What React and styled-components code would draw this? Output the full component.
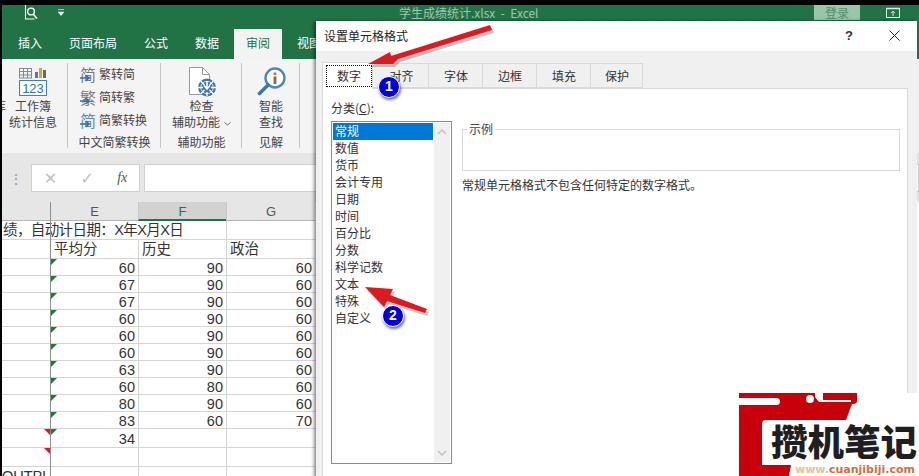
import React from 'react';
import styled, { createGlobalStyle, css } from 'styled-components';

const cjk = `"Noto Sans CJK SC", "Liberation Sans", sans-serif`;

const GlobalStyle = createGlobalStyle`
    html, body { margin: 0; padding: 0; background: #000; }
    body { font-family: ${cjk}; }
`

const scores = [
    ['60', '90', '60'], ['67', '90', '60'], ['67', '90', '60'], ['60', '90', '60'], ['60', '90', '60'],
    ['60', '90', '60'], ['63', '90', '60'], ['60', '80', '60'], ['80', '90', '60'], ['83', '60', '70'],
]
const mainTabs = ['插入', '页面布局', '公式', '数据', '审阅', '视图']
const dialogTabs = ['数字', '对齐', '字体', '边框', '填充', '保护']
const categories = ['常规', '数值', '货币', '会计专用', '日期', '时间', '百分比', '分数', '科学记数', '文本', '特殊', '自定义']

const StatsIcon = () => (
    <svg width="30" height="30" viewBox="0 0 30 30">
        <g fill="none" stroke="#7f8c96">
            <rect x="1.5" y="1.5" width="12" height="9.5" />
            <path d="M1.5 4.5h12M1.5 8h12M5.5 1.5V11M9.5 1.5V11" />
        </g>
        <rect x="17" y="5" width="3" height="6" fill="#4a7db5" />
        <rect x="21" y="1" width="3" height="10" fill="#e0a030" />
        <rect x="25" y="3" width="3" height="8" fill="#5e6b75" />
        <rect x="1.5" y="13.5" width="27" height="15" fill="#fff" stroke="#3f7fbf" />
        <text x="15" y="26" fontSize="13" textAnchor="middle" fill="#2f75b5" fontFamily="Liberation Sans">123</text>
    </svg>
)

const DocIcon = () => (
    <svg width="30" height="32" viewBox="0 0 30 32">
        <path d="M2.5 1.5h13l7 7v20h-20z" fill="#fff" stroke="#9a9a9a" />
        <path d="M15.5 1.5v7h7" fill="none" stroke="#9a9a9a" />
        <circle cx="20" cy="21.5" r="9" fill="#3f77ad" />
        <circle cx="20" cy="21.5" r="6.2" fill="none" stroke="#cfe0ef" strokeWidth="1" />
        <path d="M13.5 15l4 4M26.5 15l-4 4M13.5 28l4-4M26.5 28l-4-4M11 21.5h5M24 21.5h5M20 26v4" stroke="#fff" strokeWidth="1.3" />
        <path d="M20 15v7M17 19.5l3 3.5 3-3.5" fill="none" stroke="#fff" strokeWidth="1.6" />
    </svg>
)

const LookupIcon = () => (
    <svg width="30" height="30" viewBox="0 0 30 30">
        <circle cx="19" cy="11" r="9.5" fill="#fff" stroke="#4a86c0" strokeWidth="2.4" />
        <path d="M12 18L3.5 26.5" stroke="#3f77ad" strokeWidth="3.6" strokeLinecap="round" />
        <rect x="17.6" y="9.5" width="2.8" height="7.5" fill="#7a6a58" />
        <rect x="17.6" y="5.5" width="2.8" height="2.6" fill="#c8702a" />
    </svg>
)

const ConvertArrow = () => (
    <svg width="11" height="8" viewBox="0 0 11 8">
        <path d="M0 4h8M5.5 1L9 4 5.5 7" fill="none" stroke="#2f6fb0" strokeWidth="1.6" />
    </svg>
)

const PreviewIcon = () => (
    <svg width="14" height="15" viewBox="0 0 14 15">
        <path d="M1.5 0v14h9" fill="none" stroke="#fff" strokeWidth="1.1" />
        <circle cx="7" cy="6.5" r="3.4" fill="none" stroke="#fff" strokeWidth="1.4" />
        <path d="M9.5 9.5l3.5 4" stroke="#fff" strokeWidth="1.6" />
    </svg>
)

const ShareIcon = () => (
    <svg width="14" height="11" viewBox="0 0 14 11">
        <rect x="0.5" y="1.5" width="13" height="9" fill="none" stroke="#dfeee5" />
        <path d="M0.5 1.5h13" stroke="#dfeee5" strokeWidth="1.5" />
        <path d="M7 9V4.5M5 6.2l2-2 2 2" fill="none" stroke="#dfeee5" />
    </svg>
)

const RedArrow = ({ points, left, top, width, height }) => (
    <ArrowSvg $left={left} $top={top} width={width} height={height} viewBox={`0 0 ${width} ${height}`}>
        <polygon points={points} fill="rgba(60,40,40,0.28)" transform="translate(2 3)" />
        <polygon points={points} fill="#dc1a20" />
    </ArrowSvg>
)

const App = () => {
    return (
        <Screen>
            <GlobalStyle />
            <TitleBar>
                <PreviewSlot><PreviewIcon /></PreviewSlot>
                <QuickArrow>
                    <svg width="6" height="7" viewBox="0 0 6 7"><path d="M0 .5h6M0 3h6l-3 3.5z" fill="#fff" stroke="#fff" strokeWidth=".6" /></svg>
                </QuickArrow>
                <FileName>学生成绩统计.xlsx&nbsp; - &nbsp;Excel</FileName>
                <LoginButton>登录</LoginButton>
                <ShareSlot><ShareIcon /></ShareSlot>
            </TitleBar>
            <TabStrip>
                {mainTabs.map((t) => (
                    <MainTab key={t} $active={t === '审阅'}>{t}</MainTab>
                ))}
            </TabStrip>
            <Ribbon>
                <Group $width={66} $inset={4}>
                    <EdgeGlyph>库</EdgeGlyph>
                    <GroupBody>
                        <IconSlot><StatsIcon /></IconSlot>
                        <BigLabel>工作簿<br />统计信息</BigLabel>
                    </GroupBody>
                    <GroupName />
                </Group>
                <Group $width={93}>
                    <GroupBody $rows>
                        <SmallRow><SmallGlyph>简<ConvertArrow /></SmallGlyph>繁转简</SmallRow>
                        <SmallRow><SmallGlyph>繁<ConvertArrow /></SmallGlyph>简转繁</SmallRow>
                        <SmallRow><SmallGlyph $blue>简<ConvertArrow /></SmallGlyph>简繁转换</SmallRow>
                    </GroupBody>
                    <GroupName>中文简繁转换</GroupName>
                </Group>
                <Group $width={81}>
                    <GroupBody>
                        <IconSlot><DocIcon /></IconSlot>
                        <BigLabel>
                            检查<br />辅助功能
                            <Chevron width="7" height="4" viewBox="0 0 7 4"><path d="M.5.5l3 2.5 3-2.5" fill="none" stroke="#666" /></Chevron>
                        </BigLabel>
                    </GroupBody>
                    <GroupName>辅助功能</GroupName>
                </Group>
                <Group $width={58}>
                    <GroupBody>
                        <IconSlot><LookupIcon /></IconSlot>
                        <BigLabel>智能<br />查找</BigLabel>
                    </GroupBody>
                    <GroupName>见解</GroupName>
                </Group>
            </Ribbon>
            <FormulaBar>
                <Grip>⋮</Grip>
                <FormulaButtons>
                    <FormulaIcon>✕</FormulaIcon>
                    <FormulaIcon>✓</FormulaIcon>
                    <FormulaIcon $fx>fx</FormulaIcon>
                </FormulaButtons>
                <FormulaInput />
            </FormulaBar>
            <Sheet>
                <HeaderCell />
                <HeaderCell $divided>E</HeaderCell>
                <HeaderCell $divided $selected>F</HeaderCell>
                <HeaderCell $divided>G</HeaderCell>

                <Cell $span={3} $h={19}>绩，自动计日期：X年X月X日</Cell>
                <Cell $divided $h={19} />

                <Cell $h={19} />
                <Cell $divided $h={19}>平均分</Cell>
                <Cell $divided $h={19}>历史</Cell>
                <Cell $divided $h={19}>政治</Cell>

                {scores.map((row, i) => (
                    <React.Fragment key={i}>
                        <Cell $h={17} />
                        <Cell $divided $num $flag $h={17}>{row[0]}</Cell>
                        <Cell $divided $num $h={17}>{row[1]}</Cell>
                        <Cell $divided $num $h={17}>{row[2]}</Cell>
                    </React.Fragment>
                ))}

                <Cell $error $h={19} />
                <Cell $divided $num $flag $h={19}>34</Cell>
                <Cell $divided $h={19} />
                <Cell $divided $h={19} />

                <Cell $error $h={19} />
                <Cell $divided $h={19} />
                <Cell $divided $h={19} />
                <Cell $divided $h={19} />

                <Cell $clip $h={19}>OUTPUT</Cell>
                <Cell $divided $h={19} />
                <Cell $divided $h={19} />
                <Cell $divided $h={19} />
            </Sheet>

            <Dialog>
                <DialogHead>
                    <DialogTitle>设置单元格格式</DialogTitle>
                    <HelpMark>?</HelpMark>
                    <CloseMark>
                        <svg width="11" height="11" viewBox="0 0 11 11"><path d="M.5.5l10 10M10.5.5l-10 10" stroke="#222" strokeWidth="1" /></svg>
                    </CloseMark>
                </DialogHead>
                <DialogBody>
                    <DialogTabs>
                        {dialogTabs.map((t, i) => (
                            <DialogTab key={t} $active={i === 0}>{i === 0 ? <FocusBox>{t}</FocusBox> : t}</DialogTab>
                        ))}
                    </DialogTabs>
                    <Panel>
                        <ListColumn>
                            <ListCaption>分类(<u>C</u>):</ListCaption>
                            <ListBox>
                                <ListItems>
                                    {categories.map((c, i) => (
                                        <ListItem key={c} $selected={i === 0}>{c}</ListItem>
                                    ))}
                                </ListItems>
                                <ScrollTrack>
                                    <svg width="10" height="6" viewBox="0 0 10 6"><path d="M1 5l4-4 4 4" fill="none" stroke="#c2c2c2" strokeWidth="1.5" /></svg>
                                    <svg width="10" height="6" viewBox="0 0 10 6"><path d="M1 1l4 4 4-4" fill="none" stroke="#c2c2c2" strokeWidth="1.5" /></svg>
                                </ScrollTrack>
                            </ListBox>
                        </ListColumn>
                        <DetailColumn>
                            <SampleBox><SampleLegend>示例</SampleLegend></SampleBox>
                            <Description>常规单元格格式不包含任何特定的数字格式。</Description>
                        </DetailColumn>
                    </Panel>
                </DialogBody>
            </Dialog>

            <RedArrow left={362} top={20} width={136} height={52}
                points="6,44 28,32 29,36 128,5 130,10 36,39 31,44" />
            <Badge $left={378} $top={76}>1</Badge>
            <RedArrow left={360} top={282} width={72} height={36}
                points="5,5 33,7 30,13 67,27 65,31 27,19 24,25" />
            <Badge $left={382} $top={305}>2</Badge>

            <Watermark>
                <LogoBack width="180" height="83" viewBox="0 0 180 83">
                    <path d="M0 0H118V8Q118 11 114 11H113L107 27H27Q23 27 23 31V72H52L50 83H0Z" fill="#c8000b" />
                    <rect x="-4" y="5" width="45" height="7" rx="3.5" fill="#fff" />
                    <circle cx="71" cy="6" r="4" fill="#fff" />
                    <path d="M76 0H84V7H112V9H80L76 4Z" fill="#fff" />
                </LogoBack>
                <LogoTitle>攒机笔记</LogoTitle>
                <LogoSite>www.<SiteName>cuanjibiji.com</SiteName></LogoSite>
            </Watermark>
        </Screen>
    )
}

export default App

const Screen = styled.div`
    position: relative;
    width: 919px;
    height: 476px;
    box-sizing: border-box;
    padding: 5px 0 0 2px;
    overflow: hidden;
    background: #000;
    display: flex;
    flex-direction: column;
`

const TitleBar = styled.div`
    height: 15px;
    flex: none;
    background: #217346;
    display: flex;
    align-items: center;
    color: #fff;
`

const PreviewSlot = styled.div`
    width: 14px;
    margin-left: 22px;
    display: flex;
`

const QuickArrow = styled.div`
    width: 6px;
    margin-left: 20px;
    display: flex;
`

const FileName = styled.div`
    margin-left: 335px;
    width: 415px;
    font-size: 12px;
    line-height: 15px;
    color: #a3c5b0;
    white-space: nowrap;
`

const LoginButton = styled.div`
    width: 46px;
    height: 15px;
    background: #9ac5a9;
    color: #4d8f68;
    font-size: 12px;
    line-height: 15px;
    text-align: center;
`

const ShareSlot = styled.div`
    margin-left: 26px;
    display: flex;
`

const TabStrip = styled.div`
    height: 39px;
    flex: none;
    box-sizing: border-box;
    padding: 9px 0 0 4px;
    background: #217346;
    display: flex;
`

const MainTab = styled.div`
    height: 30px;
    padding: 0 12px;
    margin-right: 3px;
    font-size: 12px;
    line-height: 28px;
    color: #fff;
    white-space: nowrap;
    ${(p) => p.$active && css`
        background: #f3f3f3;
        color: #217346;
    `}
`

const Ribbon = styled.div`
    height: 94px;
    flex: none;
    background: #f4f4f4;
    display: flex;
    overflow: hidden;
`

const Group = styled.div`
    width: ${(p) => p.$width}px;
    flex: none;
    box-sizing: border-box;
    padding-right: ${(p) => p.$inset || 0}px;
    display: flex;
    flex-direction: column;
    position: relative;
    &::after {
        content: '';
        position: absolute;
        right: 0;
        top: 4px;
        bottom: 5px;
        width: 1px;
        background: #c6c6c6;
    }
`

const EdgeGlyph = styled.span`
    position: absolute;
    left: -8px;
    top: 39px;
    font-size: 12px;
    line-height: 16px;
    color: #444;
`

const GroupBody = styled.div`
    flex: 1;
    display: flex;
    flex-direction: column;
    align-items: center;
    padding-top: ${(p) => (p.$rows ? '3px' : '7px')};
    ${(p) => p.$rows && css`
        align-items: flex-start;
        padding-left: 12px;
    `}
`

const IconSlot = styled.div`
    height: 32px;
    display: flex;
    align-items: center;
`

const BigLabel = styled.div`
    font-size: 12px;
    line-height: 16px;
    text-align: center;
    color: #444;
    white-space: nowrap;
`

const Chevron = styled.svg`
    margin-left: 4px;
    vertical-align: middle;
`

const SmallRow = styled.div`
    height: 23px;
    display: flex;
    align-items: center;
    font-size: 12px;
    color: #444;
    white-space: nowrap;
`

const SmallGlyph = styled.span`
    position: relative;
    width: 19px;
    font-size: 16px;
    line-height: 20px;
    color: ${(p) => (p.$blue ? '#5b8db8' : '#7a7a7a')};
    svg {
        position: absolute;
        left: 0;
        bottom: 2px;
    }
`

const GroupName = styled.div`
    height: 22px;
    flex: none;
    font-size: 12px;
    line-height: 22px;
    text-align: center;
    color: #444;
    white-space: nowrap;
`

const FormulaBar = styled.div`
    height: 49px;
    flex: none;
    box-sizing: border-box;
    padding: 11px 0 10px 7px;
    background: #e6e6e6;
    display: flex;
    align-items: stretch;
`

const Grip = styled.div`
    width: 22px;
    font-size: 14px;
    line-height: 28px;
    color: #999;
`

const FormulaButtons = styled.div`
    width: 109px;
    box-sizing: border-box;
    background: #fff;
    border: 1px solid #d0d0d0;
    display: flex;
    justify-content: space-around;
    align-items: center;
`

const FormulaIcon = styled.span`
    font-size: ${(p) => (p.$fx ? '14px' : '16px')};
    color: ${(p) => (p.$fx ? '#555' : '#c0c0c0')};
    font-family: ${(p) => (p.$fx ? '"Liberation Serif", serif' : '"DejaVu Sans", sans-serif')};
    font-style: ${(p) => (p.$fx ? 'italic' : 'normal')};
`

const FormulaInput = styled.div`
    flex: 1;
    margin-left: 4px;
    background: #fff;
    border: 1px solid #d0d0d0;
`

const Sheet = styled.div`
    flex: 1;
    min-height: 0;
    overflow: hidden;
    position: relative;
    background: #fff;
    display: grid;
    grid-template-columns: 48px 88px 88px 89px;
    grid-auto-rows: min-content;
    font-family: "Liberation Sans", "Noto Sans CJK SC", sans-serif;
    &::after {
        content: '';
        position: absolute;
        left: 48px;
        top: 0;
        bottom: 0;
        width: 1px;
        background: #8d8d8d;
    }
`

const HeaderCell = styled.div`
    height: 19px;
    box-sizing: border-box;
    background: ${(p) => (p.$selected ? '#d2d2d2' : '#e6e6e6')};
    color: ${(p) => (p.$selected ? '#2c6e49' : '#555')};
    border-bottom: ${(p) => (p.$selected ? '2px solid #217346' : '1px solid #b5b5b5')};
    border-left: ${(p) => (p.$divided ? '1px solid #c8c8c8' : 'none')};
    font-size: 13px;
    line-height: 19px;
    text-align: center;
`

const Cell = styled.div`
    grid-column: span ${(p) => p.$span || 1};
    height: ${(p) => p.$h}px;
    box-sizing: border-box;
    position: relative;
    border-bottom: 1px solid #d4d4d4;
    border-left: ${(p) => (p.$divided ? '1px solid #d4d4d4' : 'none')};
    padding: 0 3px;
    font-size: 14.5px;
    line-height: ${(p) => p.$h + (p.$num ? 1 : 0)}px;
    color: #333;
    text-align: ${(p) => (p.$num ? 'right' : 'left')};
    white-space: nowrap;
    overflow: hidden;
    ${(p) => p.$span && css`
        padding-left: 1px;
        letter-spacing: -0.6px;
    `}
    ${(p) => p.$clip && css`
        padding: 0;
        line-height: 19px;
    `}
    ${(p) => p.$flag && css`
        &::before {
            content: '';
            position: absolute;
            left: 0;
            top: 0;
            border-top: 6px solid #1e7b34;
            border-right: 6px solid transparent;
        }
    `}
    ${(p) => p.$error && css`
        &::before {
            content: '';
            position: absolute;
            right: 0;
            top: 0;
            border-top: 6px solid #e81123;
            border-left: 6px solid transparent;
        }
    `}
`

const Dialog = styled.div`
    position: absolute;
    left: 316px;
    top: 21px;
    width: 601px;
    height: 470px;
    background: #f0f0f0;
    box-shadow: -2px 0 3px rgba(0, 0, 0, 0.45);
    display: flex;
    flex-direction: column;
`

const DialogHead = styled.div`
    height: 30px;
    flex: none;
    background: #fff;
    display: flex;
    align-items: center;
    padding: 0 0 2px 8px;
    box-sizing: border-box;
`

const DialogTitle = styled.div`
    flex: 1;
    font-size: 12px;
    color: #222;
`

const HelpMark = styled.div`
    width: 44px;
    font-family: "Liberation Sans", sans-serif;
    font-weight: bold;
    font-size: 13px;
    color: #333;
`

const CloseMark = styled.div`
    width: 28px;
    display: flex;
`

const DialogBody = styled.div`
    flex: 1;
    display: flex;
    flex-direction: column;
    padding: 11px 9px 0 6px;
`

const DialogTabs = styled.div`
    height: 26px;
    flex: none;
    display: flex;
    align-items: flex-end;
    position: relative;
`

const DialogTab = styled.div`
    box-sizing: border-box;
    width: ${(p) => (p.$active ? '51px' : '54px')};
    height: ${(p) => (p.$active ? '27px' : '25px')};
    margin-bottom: ${(p) => (p.$active ? '-1px' : '0')};
    background: ${(p) => (p.$active ? '#fff' : '#f0f0f0')};
    border: 1px solid #d9d9d9;
    border-left: ${(p) => (p.$active ? '1px solid #d9d9d9' : 'none')};
    border-bottom: ${(p) => (p.$active ? 'none' : '1px solid #d9d9d9')};
    font-size: 12px;
    line-height: 23px;
    text-align: center;
    color: #333;
    &:nth-child(2) { width: 56px; padding-left: 2px; }
    &:nth-child(n+3) { padding-left: 1px; }
    &:last-child { width: 52px; }
`

const FocusBox = styled.div`
    box-sizing: border-box;
    height: 22px;
    margin: 2px 0 0 3px;
    border: 1px dotted #111;
    line-height: 19px;
`

const Panel = styled.div`
    flex: 1;
    background: #fff;
    border: 1px solid #d9d9d9;
    display: flex;
    padding: 10px 7px 0 8px;
`

const ListColumn = styled.div`
    width: 121px;
    flex: none;
`

const ListCaption = styled.div`
    height: 22px;
    font-size: 12px;
    line-height: 18px;
    color: #333;
`

const ListBox = styled.div`
    height: 343px;
    box-sizing: border-box;
    border: 1px solid #8a8a8a;
    padding: 1px;
    display: flex;
`

const ListItems = styled.div`
    flex: 1;
    padding-right: 1px;
`

const ListItem = styled.div`
    height: 17px;
    padding-left: 2px;
    font-size: 12px;
    line-height: 15px;
    color: ${(p) => (p.$selected ? '#fff' : '#333')};
    background: ${(p) => (p.$selected ? '#0078d7' : 'transparent')};
`

const ScrollTrack = styled.div`
    width: 16px;
    flex: none;
    background: #f0f0f0;
    display: flex;
    flex-direction: column;
    justify-content: space-between;
    align-items: center;
    padding: 6px 0;
    box-sizing: border-box;
`

const DetailColumn = styled.div`
    flex: 1;
    margin-left: 10px;
    padding-top: 30px;
`

const SampleBox = styled.div`
    height: 42px;
    box-sizing: border-box;
    border: 1px solid #d9d9d9;
    position: relative;
`

const SampleLegend = styled.span`
    position: absolute;
    left: 4px;
    top: -9px;
    padding: 0 2px;
    background: #fff;
    font-size: 12px;
    line-height: 16px;
    color: #444;
`

const Description = styled.div`
    margin-top: 5px;
    font-size: 12px;
    line-height: 17px;
    color: #333;
`

const ArrowSvg = styled.svg`
    position: absolute;
    left: ${(p) => p.$left}px;
    top: ${(p) => p.$top}px;
`

const Badge = styled.div`
    position: absolute;
    left: ${(p) => p.$left}px;
    top: ${(p) => p.$top}px;
    width: 22px;
    height: 22px;
    box-sizing: border-box;
    border-radius: 50%;
    background: #0000d8;
    border: 1.5px solid #fff;
    box-shadow: 1px 2px 3px rgba(0, 0, 0, 0.55);
    color: #fff;
    font-family: "Liberation Sans", sans-serif;
    font-weight: bold;
    font-size: 14px;
    line-height: 19px;
    text-align: center;
`

const Watermark = styled.div`
    position: absolute;
    left: 739px;
    top: 393px;
    width: 180px;
    height: 83px;
    background: #fff;
    overflow: hidden;
`

const LogoBack = styled.svg`
    display: block;
`

const LogoTitle = styled.div`
    position: absolute;
    left: 32px;
    top: 28px;
    font-size: 36.5px;
    line-height: 40px;
    font-weight: 900;
    color: #1f1f1f;
    white-space: nowrap;
`

const LogoSite = styled.div`
    position: absolute;
    left: 56px;
    top: 70px;
    font-family: "DejaVu Sans", sans-serif;
    font-weight: bold;
    font-size: 11px;
    line-height: 13px;
    color: #e3c39a;
    white-space: nowrap;
`

const SiteName = styled.span`
    color: #d0703c;
`
